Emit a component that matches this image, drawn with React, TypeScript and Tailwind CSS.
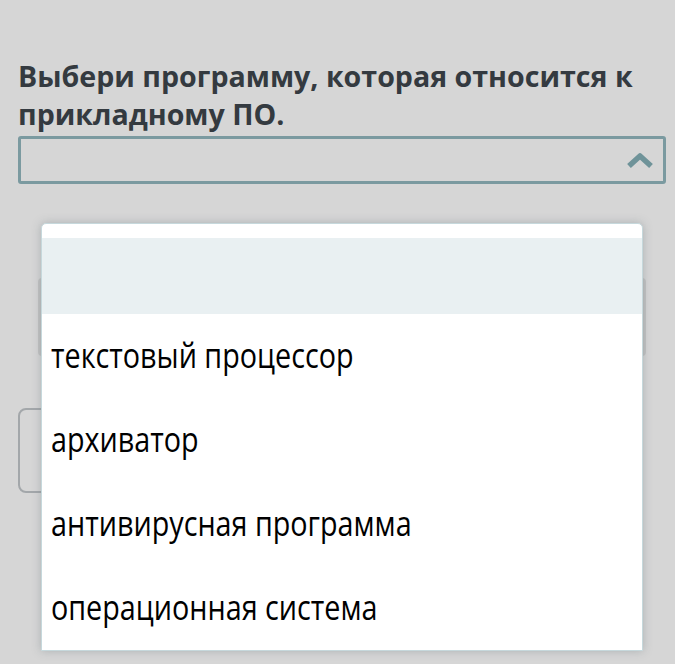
import React from 'react'

const options = ['текстовый процессор', 'архиватор', 'антивирусная программа', 'операционная система']

export default function App() {
  return (
    <div className="relative h-[664px] w-[675px] overflow-hidden bg-[#d6d6d6] font-['Open_Sans',sans-serif]">
      <div className="pl-[18px] pr-[9px] pt-[57px]">
        <h1 className="text-[28.6px] font-bold leading-[38px] text-[#343a40]">
          Выбери программу, которая относится к прикладному ПО.
        </h1>
        <div className="mt-[3px] flex h-[48px] items-center justify-end rounded-[3px] border-[3px] border-[#7b9aa0] pr-[9px]">
          <svg width="28" height="18" viewBox="0 0 28 18">
            <path d="M3 15 L14 5 L25 15" fill="none" stroke="#6f9399" strokeWidth="5.5" strokeLinejoin="round" />
          </svg>
        </div>

        {/* content behind the open list */}
        <div className="ml-[20px] mt-[94px] h-[78px] w-[608px] rounded-[4px] border-[3px] border-[#c2c2c2]" />
        <div className="mt-[52px] h-[85px] w-[600px] rounded-[8px] border-2 border-[#a3a7aa]" />
      </div>

      {/* open option list */}
      <div className="absolute left-[41px] top-[223px] w-[602px] rounded-t-[5px] border border-[#c6d8dc] bg-white pt-[14px] shadow-[0_0_10px_rgba(120,130,135,0.45)]">
        <div className="h-[76px] bg-[#e9f0f2]" />
        {options.map((o) => (
          <div key={o} className="flex h-[84px] items-center pb-[3px] pl-[9px] text-[34px] leading-none text-black">
            <span className="inline-block origin-left scale-x-[0.845] whitespace-nowrap">{o}</span>
          </div>
        ))}
      </div>
    </div>
  )
}
